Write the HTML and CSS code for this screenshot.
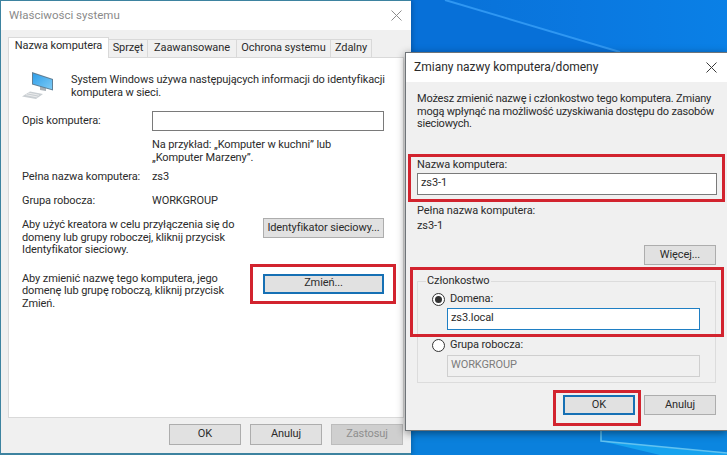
FILE: index.html
```html
<!DOCTYPE html>
<html lang="pl">
<head>
  <meta charset="UTF-8">
  <title>Właściwości systemu</title>
  <link rel="stylesheet" href="styles.css">
</head>
<body>
  <div class="desktop">
    <svg class="wallpaper" width="727" height="455" viewBox="0 0 727 455">
      <defs>
        <linearGradient id="wall" x1="0" y1="0" x2="1" y2="0">
          <stop offset="0.56" stop-color="#0870d6"/>
          <stop offset="0.8" stop-color="#0a78e0"/>
          <stop offset="1" stop-color="#0a80e6"/>
        </linearGradient>
        <linearGradient id="screen" x1="0" y1="0" x2="1" y2="1">
          <stop offset="0" stop-color="#2f9fea"/>
          <stop offset="1" stop-color="#7ccaf5"/>
        </linearGradient>
      </defs>
      <rect width="727" height="455" fill="url(#wall)"/>
      <polygon points="411,0 445,0 620,52 411,52" fill="#0770d8"/>
      <line x1="445" y1="0" x2="620" y2="52" stroke="#2f97f2" stroke-width="2"/>
      <rect x="411" y="431" width="316" height="24" fill="#0a80dc"/>
      <polygon points="601,431 727,431 727,453 601,441" fill="#0b86e0"/>
      <polygon points="601,441 727,453 727,455 660,455" fill="#16a2ee"/>
      <polyline points="601,431 601,441 727,453" fill="none" stroke="#62c2f0" stroke-width="1.500"/>
    </svg>

    <!-- okno glowne -->
    <section class="window window-main">
      <header class="titlebar">
        <span class="title title-muted">Właściwości systemu</span>
        <svg class="close" width="11" height="11" viewBox="0 0 11 11"><path d="M0.5 0.5L10.5 10.5M10.5 0.5L0.5 10.5" stroke="#8c8c8c" fill="none"/></svg>
      </header>
      <div class="main-body">
        <ul class="tabs">
          <li class="tab tab-active">Nazwa komputera</li>
          <li class="tab tab-sprzet">Sprzęt</li>
          <li class="tab tab-zaaw">Zaawansowane</li>
          <li class="tab tab-ochrona">Ochrona systemu</li>
          <li class="tab tab-zdalny">Zdalny</li>
        </ul>
        <div class="panel">
          <div class="intro">
            <svg class="pc-icon" width="32" height="30" viewBox="0 0 32 30">
              <polygon points="18,13 24,15 24,19 18,18" fill="#a8b0b6"/>
              <polygon points="10,0 31,7 31,18.500 10,12.500" fill="#5f7f96"/>
              <polygon points="11,1.500 30,7.800 30,17.200 11,11.700" fill="url(#screen)"/>
              <polygon points="8,19.500 21,22 14,27 0,24.500" fill="#c9ced2"/>
              <path d="M6 21L17 23.200M4 22.700L15.500 25" stroke="#f2f2f2" stroke-width="0.800" fill="none"/>
            </svg>
            <p class="intro-text">System Windows używa następujących informacji do identyfikacji komputera w sieci.</p>
          </div>
          <div class="row row-desc">
            <span class="row-label">Opis komputera:</span>
            <span class="field field-desc"></span>
          </div>
          <p class="hint">Na przykład: „Komputer w kuchni” lub<br>„Komputer Marzeny”.</p>
          <div class="row row-full">
            <span class="row-label">Pełna nazwa komputera:</span>
            <span>zs3</span>
          </div>
          <div class="row row-group">
            <span class="row-label">Grupa robocza:</span>
            <span>WORKGROUP</span>
          </div>
          <div class="action action-id">
            <p class="action-text">Aby użyć kreatora w celu przyłączenia się do domeny lub grupy roboczej, kliknij przycisk Identyfikator sieciowy.</p>
            <button class="btn btn-wide btn-id">Identyfikator sieciowy...</button>
          </div>
          <div class="action action-change">
            <p class="action-text">Aby zmienić nazwę tego komputera, jego domenę lub grupę roboczą, kliknij przycisk Zmień.</p>
            <button class="btn btn-wide btn-default btn-change">Zmień...</button>
          </div>
        </div>
        <div class="buttons buttons-main">
          <button class="btn">OK</button>
          <button class="btn">Anuluj</button>
          <button class="btn btn-disabled">Zastosuj</button>
        </div>
      </div>
      <div class="marker marker-change"></div>
    </section>

    <!-- okno zmiany nazwy -->
    <section class="window window-rename">
      <header class="titlebar titlebar-rename">
        <span class="title title-rename">Zmiany nazwy komputera/domeny</span>
        <svg class="close" width="11" height="11" viewBox="0 0 11 11"><path d="M0.5 0.5L10.5 10.500M10.5 0.5L0.5 10.5" stroke="#3a3a3a" fill="none"/></svg>
      </header>
      <div class="rename-body">
        <p class="rename-text">Możesz zmienić nazwę i członkostwo tego komputera. Zmiany mogą wpłynąć na możliwość uzyskiwania dostępu do zasobów sieciowych.</p>
        <label class="rename-label">Nazwa komputera:</label>
        <div class="field field-name">zs3-1</div>
        <p class="full-label">Pełna nazwa komputera:</p>
        <p class="full-value">zs3-1</p>
        <div class="more"><button class="btn">Więcej...</button></div>
        <fieldset class="member">
          <legend class="member-legend">Członkostwo</legend>
          <div class="radio-row radio-domain">
            <span class="radio radio-on"></span>
            <span>Domena:</span>
          </div>
          <div class="field field-domain">zs3.local</div>
          <div class="radio-row radio-work">
            <span class="radio"></span>
            <span>Grupa robocza:</span>
          </div>
          <div class="field field-off">WORKGROUP</div>
        </fieldset>
        <div class="buttons buttons-rename">
          <button class="btn btn-default">OK</button>
          <button class="btn">Anuluj</button>
        </div>
      </div>
      <div class="marker marker-name"></div>
      <div class="marker marker-member"></div>
      <div class="marker marker-ok"></div>
    </section>
  </div>
</body>
</html>
```

FILE: styles.css
```css
* {margin: 0; padding: 0; box-sizing: border-box;}

ul, li {
  list-style: none;
}
body {
  font-family: Roboto, "Open Sans", sans-serif;
  font-size: 11px;
  letter-spacing: -0.1px;
  line-height: 12.5px;
  color: #2b2b2b;
}
.desktop {
  position: relative;
  width: 727px;
  height: 455px;
  overflow: hidden;
}
.wallpaper {
  position: absolute;
  top: 0;
  left: 0;
}

/* okna */
.window {
  position: absolute;
}
.window-main {
  top: 0;
  left: 0;
  width: 411px;
  height: 455px;
  border: 1px solid #3d83a0;
  border-width: 1px 0 2px 1px;
  background-color: #f0f0f0;
  box-shadow: 1px 0 5px rgba(0, 0, 0, 0.25);
}
.window-rename {
  top: 52px;
  left: 405px;
  width: 322px;
  height: 379px;
  border: 1px solid #6f7478;
  border-right: 0;
  background-color: #f0f0f0;
  box-shadow: 0 2px 8px rgba(0, 0, 0, 0.45);
}
.titlebar {
  display: flex;
  align-items: center;
  justify-content: space-between;
  height: 29px;
  padding: 0 9px 0 8px;
  background-color: #fff;
}
.titlebar-rename {
  padding: 0 10px 0 8px;
}
.title {
  font-size: 11.5px;
  letter-spacing: 0;
}
.title-rename {
  font-size: 12px;
}
.title-muted {
  color: #8a8a8a;
}

/* zakladki */
.main-body {
  padding: 7px 7px 0;
}
.tabs {
  display: flex;
  align-items: flex-end;
  height: 20px;
}
.tab {
  height: 18px;
  padding-top: 2px;
  text-align: center;
  background-color: #f0f0f0;
  border: 1px solid #d9d9d9;
  border-bottom: 0;
  border-left: 0;
  white-space: nowrap;
}
.tab-active {
  position: relative;
  z-index: 1;
  width: 101px;
  height: 21px;
  margin-bottom: -1px;
  background-color: #fff;
  border-left: 1px solid #d9d9d9;
}
.tab-sprzet {width: 39px;}
.tab-zaaw {width: 89px;}
.tab-ochrona {width: 94px;}
.tab-zdalny {width: 41px;}

.panel {
  width: 396px;
  height: 361px;
  padding: 14px 19px 0 13px;
  background-color: #fff;
  border: 1px solid #d9d9d9;
}
.intro {
  display: flex;
  gap: 17px;
  margin-right: -12px;
}
.pc-icon {
  flex: none;
}
.intro-text {
  width: 325px;
  padding-top: 2px;
}
.row {
  display: flex;
  align-items: center;
}
.row-label {
  width: 130px;
  flex: none;
}
.row-desc {
  margin-top: 9px;
}
.hint {
  margin: 8px 0 0 130px;
}
.row-full {
  margin-top: 7px;
}
.row-group {
  margin-top: 11px;
}
.action {
  display: flex;
  justify-content: space-between;
  align-items: flex-start;
}
.action-id {
  margin-top: 12px;
}
.action-change {
  margin-top: 16px;
}
.action-text {
  width: 225px;
}
.btn-id {
  height: 21px;
  margin-top: -1px;
}
.btn-change {
  margin-top: 1px;
}

/* pola */
.field {
  display: block;
  height: 21px;
  padding: 3px 3px 0;
  background-color: #fff;
  border: 1px solid #7a7a7a;
  white-space: nowrap;
}
.field-desc {
  width: 233px;
  height: 20px;
}
.field-name {
  width: 300px;
  height: 22px;
  margin-top: 2px;
}
.field-domain {
  width: 253px;
  height: 22px;
  margin: 1px 0 0 15px;
  border-color: #1f7fc4;
}
.field-off {
  width: 253px;
  height: 22px;
  margin: 2px 0 0 15px;
  color: #7c7c7c;
  background-color: #f0f0f0;
  border-color: #cfcfcf;
}

/* przyciski */
.btn {
  width: 72px;
  height: 20px;
  font: inherit;
  letter-spacing: inherit;
  color: inherit;
  background-color: #e1e1e1;
  border: 1px solid #adadad;
}
.btn-wide {
  width: 121px;
}
.btn-default {
  border: 2px solid #1670b4;
}
.btn-disabled {
  color: #8e8e8e;
  background-color: #cfcfcf;
  border-color: #bcbcbc;
}
.buttons {
  display: flex;
  justify-content: flex-end;
  gap: 9px;
}
.buttons-main {
  margin-top: 6px;
  width: 395px;
}
.buttons-main .btn {
  height: 21px;
}

/* okno zmiany nazwy */
.rename-body {
  padding: 11px 11px 0 11px;
}
.rename-text {
  width: 300px;
  letter-spacing: -0.2px;
}
.rename-label {
  display: block;
  margin-top: 28px;
}
.full-label {
  margin-top: 10px;
}
.full-value {
  margin-top: 2px;
}
.more {
  display: flex;
  justify-content: flex-end;
  margin-top: 13px;
}
.member {
  width: 299px;
  height: 108px;
  margin-top: 10px;
  padding: 0 0 0 14px;
  border: 1px solid #dcdcdc;
}
.member-legend {
  margin-left: -6px;
  padding: 0 1px;
}
.radio-row {
  display: flex;
  align-items: center;
  gap: 5px;
  height: 14px;
}
.radio-domain {
  margin-top: 5px;
}
.radio-work {
  margin-top: 9px;
}
.radio {
  position: relative;
  width: 13px;
  height: 13px;
  background-color: #fff;
  border: 1px solid #333;
  border-radius: 50%;
}
.radio-on::after {
  content: "";
  position: absolute;
  top: 2px;
  left: 2px;
  width: 7px;
  height: 7px;
  background-color: #333;
  border-radius: 50%;
}
.buttons-rename {
  margin-top: 12px;
  width: 299px;
}

/* czerwone ramki */
.marker {
  position: absolute;
  border: 3px solid #d2232e;
}
.marker-change {
  top: 263px;
  left: 249px;
  width: 146px;
  height: 40px;
}
.marker-name {
  top: 101px;
  left: 2px;
  width: 317px;
  height: 48px;
}
.marker-member {
  top: 214px;
  left: 4px;
  width: 314px;
  height: 70px;
}
.marker-ok {
  top: 337px;
  left: 147px;
  width: 88px;
  height: 36px;
}
```
